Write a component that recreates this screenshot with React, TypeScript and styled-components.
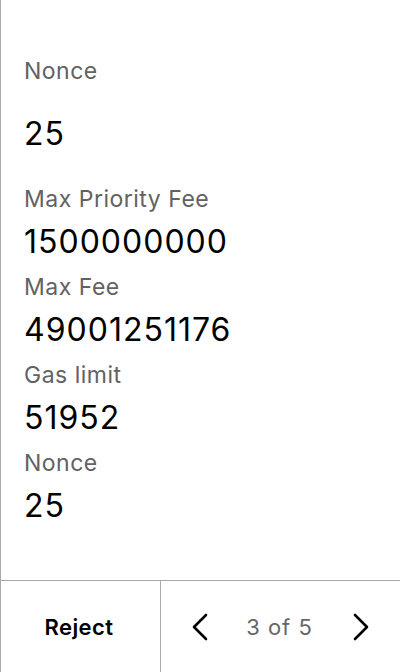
import React from 'react';
import styled, { createGlobalStyle } from 'styled-components';

const GlobalStyle = createGlobalStyle`
  html, body {
    margin: 0;
    padding: 0;
    background: #ffffff;
  }
  body {
    font-family: Inter, "Noto Sans", "Liberation Sans", sans-serif;
    -webkit-font-smoothing: antialiased;
  }
`;

const Screen = styled.div`
  box-sizing: border-box;
  width: 400px;
  height: 672px;
  display: flex;
  flex-direction: column;
  border-left: 1px solid #a9a9a9;
  background: #ffffff;
`;

const Details = styled.div`
  flex: 1;
  display: flex;
  flex-direction: column;
  gap: 11px;
  padding: 57px 24px 0 23px;
`;

const Field = styled.div<{ $spacious?: boolean }>`
  display: flex;
  flex-direction: column;
  gap: ${({ $spacious }) => ($spacious ? '29px' : '9px')};
  margin-bottom: ${({ $spacious }) => ($spacious ? '20px' : '0')};
`;

const Label = styled.div`
  font-size: 23px;
  line-height: 28px;
  letter-spacing: 0.5px;
  color: #626262;
`;

const Value = styled.div`
  font-size: 32px;
  line-height: 40px;
  letter-spacing: 1px;
  color: #000000;
`;

const Footer = styled.div`
  box-sizing: border-box;
  height: 92px;
  display: flex;
  border-top: 1px solid #a9a9a9;
`;

const RejectButton = styled.button`
  width: 160px;
  flex: none;
  border: none;
  border-right: 1px solid #a9a9a9;
  background: transparent;
  font-family: inherit;
  font-size: 22px;
  font-weight: 600;
  letter-spacing: 0.4px;
  color: #000000;
  cursor: pointer;
  padding: 0 3px 0 0;
`;

const Pager = styled.div`
  flex: 1;
  display: flex;
  align-items: center;
  justify-content: space-between;
  padding: 0 31px;
`;

const PagerText = styled.span`
  font-size: 22px;
  letter-spacing: 1px;
  color: #666666;
  margin-right: 2px;
`;

const ArrowButton = styled.button`
  display: flex;
  align-items: center;
  justify-content: center;
  border: none;
  background: transparent;
  padding: 0;
  cursor: pointer;
  color: #000000;
`;

const Chevron = ({ dir }: { dir: 'left' | 'right' }) => (
  <svg width="16" height="28" viewBox="0 0 16 28" fill="none" stroke="currentColor" strokeWidth="2.6" strokeLinecap="round" strokeLinejoin="round" aria-hidden="true">
    <polyline points={dir === 'left' ? '14,2 2,14 14,26' : '2,2 14,14 2,26'} />
  </svg>
);

const fields = [
  { label: 'Max Priority Fee', value: '1500000000' },
  { label: 'Max Fee', value: '49001251176' },
  { label: 'Gas limit', value: '51952' },
  { label: 'Nonce', value: '25' },
];

export default function App() {
  return (
    <>
      <GlobalStyle />
      <Screen>
        <Details>
          <Field $spacious>
            <Label>Nonce</Label>
            <Value>25</Value>
          </Field>
          {fields.map((f) => (
            <Field key={f.label}>
              <Label>{f.label}</Label>
              <Value>{f.value}</Value>
            </Field>
          ))}
        </Details>
        <Footer>
          <RejectButton type="button">Reject</RejectButton>
          <Pager>
            <ArrowButton type="button" aria-label="Previous">
              <Chevron dir="left" />
            </ArrowButton>
            <PagerText>3 of 5</PagerText>
            <ArrowButton type="button" aria-label="Next">
              <Chevron dir="right" />
            </ArrowButton>
          </Pager>
        </Footer>
      </Screen>
    </>
  );
}
